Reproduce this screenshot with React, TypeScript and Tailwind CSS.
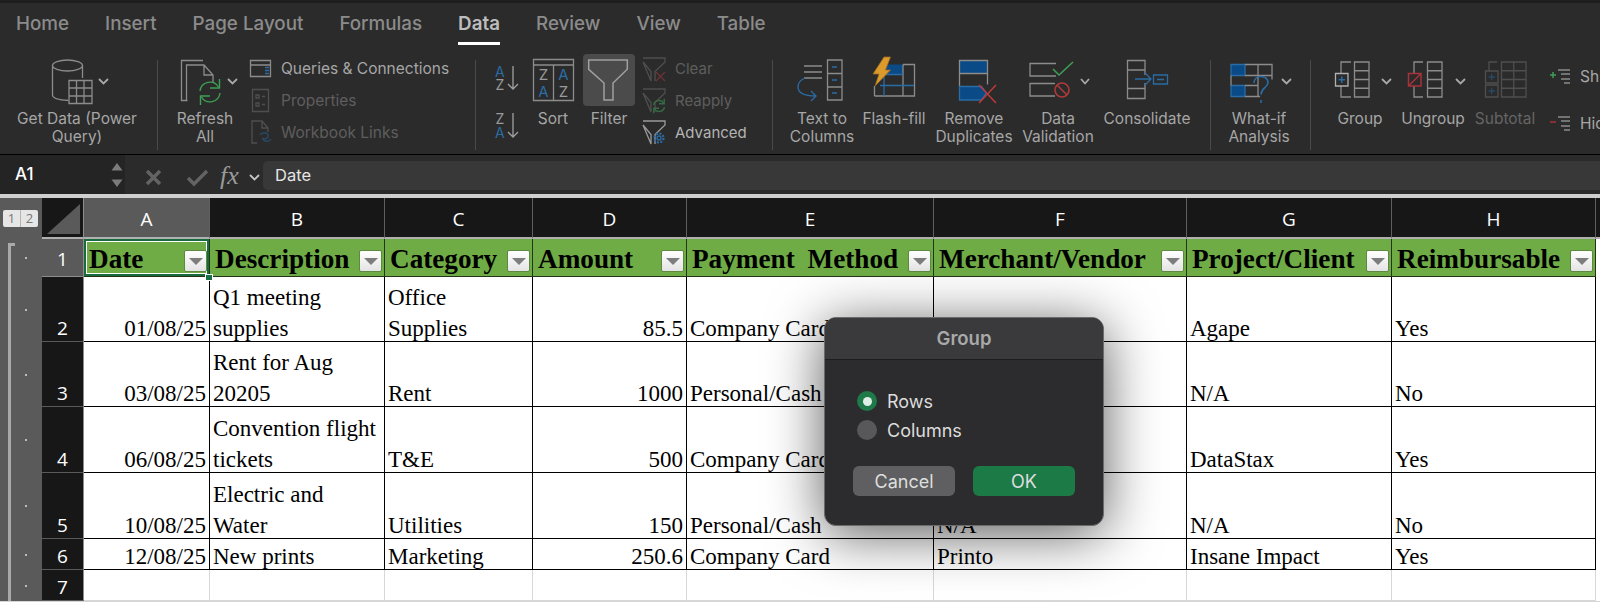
import type { ReactNode } from "react";

const GRAY = "#8c8c8c";
const DIM = "#4f4f4f";
const BLUE = "#2a6ca6";
const FILL = "#0a4a86";

// svg whose viewBox is in page coordinates, so the strokes can be read off the picture
function Ico({ x, y, w, h, children }: { x: number; y: number; w: number; h: number; children?: ReactNode }) {
  return (
    <svg className="block shrink-0" width={w} height={h} viewBox={`${x} ${y} ${w} ${h}`} fill="none" stroke={GRAY} strokeWidth={1.3}>
      {children}
    </svg>
  );
}

function Chevron({ x }: { x: number }) {
  return <path d={`M${x} 79l4.5 4.5 4.5-4.5`} stroke="#a8a8a8" strokeWidth={1.8} />;
}

function Sync({ cx, cy, r, color }: { cx: number; cy: number; r: number; color: string }) {
  const a = r * 0.35;
  return (
    <g stroke={color} strokeWidth={1.4}>
      <path d={`M${cx - r} ${cy - 1}A${r} ${r} 0 0 1 ${cx + r * 0.85} ${cy - r * 0.5}`} />
      <path d={`M${cx + r * 0.95} ${cy - r * 0.95 - a}v${r * 0.55 + a}h-${r * 0.6 + a}`} />
      <path d={`M${cx + r} ${cy + 1}A${r} ${r} 0 0 1 ${cx - r * 0.85} ${cy + r * 0.5}`} />
      <path d={`M${cx - r * 0.95} ${cy + r * 0.95 + a}v-${r * 0.55 + a}h${r * 0.6 + a}`} />
    </g>
  );
}

function Funnel({ y, color }: { y: number; color: string }) {
  return <path d={`M643 ${y}h22v4l-10 9.500v9.500M651 ${y + 23}v-9.500l-8-9.500z`} stroke={color} />;
}

function Divider() {
  return <div className="w-px h-[90px] mt-[7px] shrink-0 bg-[#4a4a4a]" />;
}

function Big({ x, w, label, dim, children }: { x: number; w: number; label: string; dim?: boolean; children?: ReactNode }) {
  return (
    <div className="flex flex-col w-min shrink-0">
      <Ico x={x} y={53} w={w} h={57}>
        {children}
      </Ico>
      <div className={`text-center text-[15.5px] leading-[18px] whitespace-pre-line ${dim ? "text-[#656565]" : "text-[#a6a6a6]"}`}>{label}</div>
    </div>
  );
}

function Small({ x, w, y, label, cls, children }: { x: number; w: number; y: number; label: string; cls: string; children?: ReactNode }) {
  return (
    <div className="flex items-center h-[32px]">
      <Ico x={x} y={y} w={w} h={32}>
        {children}
      </Ico>
      <span className={`ml-[7px] whitespace-nowrap ${cls}`}>{label}</span>
    </div>
  );
}

function Ribbon() {
  const tabs = ["Home", "Insert", "Page Layout", "Formulas", "Data", "Review", "View", "Table"];
  return (
    <div className="h-[155px] bg-[#2b2b2b] border-t-[3px] border-[#1e1e1e] border-b border-b-black overflow-hidden">
      <div className="flex gap-[36px] pl-[16px] h-[50px] pt-[9px] text-[18.8px] leading-[24px] font-medium">
        {tabs.map((t) =>
          t === "Data" ? (
            <div key={t} className="h-[33px] border-b-[3px] border-white text-[#bdbdbd] font-semibold">
              {t}
            </div>
          ) : (
            <div key={t} className="text-[#8b8b8b]">
              {t}
            </div>
          ),
        )}
      </div>

      <div className="flex pl-[12px]">
        <Big x={12} w={130} label={"Get Data (Power\nQuery)"}>
          <path d="M82.500 78V65.500c0-3-7-5.500-15-5.500s-15 2.500-15 5.500V95c0 3 7 5 16 5.500M52.500 65.500c0 3 7 5.500 15 5.500s15-2.500 15-5.500" />
          <path d="M69 80.500h23v23H69zM69 88h23M69 96h23M76.500 80.500v23M84 80.500v23" fill="#2b2b2b" />
          <Chevron x={99} />
        </Big>
        <div className="ml-[15px]">
          <Divider />
        </div>
        <div className="ml-[12px]">
          <Big x={170} w={70} label={"Refresh\nAll"}>
            <path d="M203 60.500h-21.500v40h6M186.500 100V65H204l9 10v8M204 65v10h9" />
            <Sync cx={210} cy={92} r={10} color="#3f9f55" />
            <Chevron x={228} />
          </Big>
        </div>
        <div className="ml-[8px] w-[227px] shrink-0 text-[15.5px]">
          <Small x={248} w={26} y={53} label="Queries & Connections" cls="text-[#a6a6a6]">
            <path d="M250.500 60.500h20v16h-20zM250.500 65h20" />
            <path d="M265 67.500h4M265 70.500h4M265 73.500h4" stroke={BLUE} strokeWidth={1.5} />
          </Small>
          <Small x={248} w={26} y={85} label="Properties" cls="text-[#5e5e5e]">
            <path d="M252.500 89.500h16v22h-16z" stroke={DIM} />
            <path d="M256 95h3v3h-3zM256 103h3v3h-3zM262 96.500h3M262 104.500h3" stroke={DIM} />
          </Small>
          <Small x={248} w={26} y={117} label="Workbook Links" cls="text-[#5e5e5e]">
            <path d="M257 143h-5v-22h10l6 7v4M262 121v7h6" stroke={DIM} />
            <path d="M260 135c2-3 7-3 8 0s-3 5-6 3M271 139c-2 3-7 3-8 0" stroke="#294a66" />
          </Small>
        </div>
        <Divider />
        <Ico x={476} y={53} w={50} h={90}>
          <g stroke="none" fontFamily="Inter, sans-serif" fontSize={14} fontWeight={400}>
            <text x={495} y={77} fill={BLUE}>A</text>
            <text x={495.500} y={90} fill="#9a9a9a">Z</text>
            <text x={495.500} y={124} fill="#9a9a9a">Z</text>
            <text x={495} y={138} fill={BLUE}>A</text>
          </g>
          <path d="M513 66v23m-5-5l5 5 5-5M513 113v24m-5-5l5 5 5-5" stroke="#a0a0a0" />
        </Ico>
        <Big x={526} w={54} label="Sort">
          <path d="M533.500 59.500h40v41h-40zM533.500 65h40M553.500 65v35.500" />
          <g stroke="none" fontFamily="Inter, sans-serif" fontSize={15} fontWeight={400} textAnchor="middle">
            <text x={543.500} y={80} fill="#9a9a9a">Z</text>
            <text x={543.500} y={97} fill={BLUE}>A</text>
            <text x={563.500} y={80} fill={BLUE}>A</text>
            <text x={563.500} y={97} fill="#9a9a9a">Z</text>
          </g>
        </Big>
        <Big x={580} w={58} label="Filter">
          <rect x={583} y={54} width={52} height={52} rx={4} fill="#4b4b4b" stroke="none" />
          <path d="M588.700 60h38.600v9.300L613 83v17h-9V83l-15.300-13.700z" stroke="#a0a0a0" strokeWidth={1.5} />
        </Big>
        <div className="ml-[2px] w-[132px] shrink-0 text-[15px]">
          <Small x={640} w={28} y={53} label="Clear" cls="text-[#5e5e5e]">
            <Funnel y={58} color={DIM} />
            <path d="M656 72l9 9m0-9l-9 9" stroke="#6f3232" />
          </Small>
          <Small x={640} w={28} y={85} label="Reapply" cls="text-[#5e5e5e]">
            <Funnel y={89} color={DIM} />
            <Sync cx={659} cy={106} r={5.500} color="#356b42" />
          </Small>
          <Small x={640} w={28} y={117} label="Advanced" cls="text-[#b4b4b4]">
            <Funnel y={121} color="#9a9a9a" />
            <circle cx={659} cy={138} r={2} stroke={BLUE} />
            <circle cx={659} cy={138} r={4.500} stroke={BLUE} strokeWidth={2.200} strokeDasharray="2 1.500" />
          </Small>
        </div>
        <Divider />
        <div className="ml-[12px]">
          <Big x={785} w={74} label={"Text to\nColumns"}>
            <path d="M804 66h18M804 72h18M804 78h18M827.500 60h14.500v40h-14.500zM827.500 73.500h14.500M827.500 87h14.500" />
            <path d="M832 67h5M832 80h5M832 93h5" stroke={BLUE} />
            <path d="M805 78c-5 2-7 5-7 9 0 6 7 9 18 9m-5-5l5 5-5 5" stroke={BLUE} />
          </Big>
        </div>
        <Big x={859} w={70} label="Flash-fill">
          <path d="M884 64.500h19v10h-19z" fill={FILL} stroke="none" />
          <path d="M874.500 96V86M874.500 96h40V64.500h-11.500M903 64.500v31.500" />
          <path d="M884 64.500v31.500M903 74.500H884M880 85.500h34" stroke={BLUE} />
          <path d="M884 57h6.500l-5 13h5L875 86l4-12h-6z" fill="#dd9a2c" stroke="#9c6a1e" strokeWidth={0.8} />
        </Big>
        <Big x={929} w={90} label={"Remove\nDuplicates"}>
          <path d="M959.500 60.500h28v13h-28z" fill={FILL} stroke={GRAY} />
          <path d="M987.500 73.500v11M959.500 73.500v13" />
          <path d="M959.500 86.500h22l5 6.500-5 7h-22z" fill={FILL} stroke={BLUE} />
          <path d="M979 85l17 18m0-18l-17 18" stroke="#b83a3a" strokeWidth={1.6} />
        </Big>
        <Big x={1019} w={78} label={"Data\nValidation"}>
          <path d="M1056 63.500h-26v12.500h26M1055 83.500h-25v12.500h25" />
          <path d="M1053 69l6 6 14-13" stroke="#3f9f55" strokeWidth={1.5} />
          <circle cx={1062} cy={90} r={7} stroke="#b03a3a" strokeWidth={1.6} />
          <path d="M1057 85l10 10" stroke="#b03a3a" strokeWidth={1.6} />
          <path d="M1081 79l4 4.500 4-4.500" stroke="#a8a8a8" strokeWidth={1.8} />
        </Big>
        <Big x={1097} w={100} label="Consolidate">
          <path d="M1127.500 60.500h17.500v9.500h-17.500zM1145 88.500h-17.500v10h17.500zM1127.500 70v18.500M1145 70v5M1145 83v5.500" />
          <path d="M1135 79h15m-5-6l6 6-6 6" stroke={BLUE} />
          <path d="M1153.500 75h14v9h-14zM1157 79.500h7" stroke={BLUE} />
        </Big>
        <div className="ml-[13px]">
          <Divider />
        </div>
        <div className="ml-[11px]">
          <Big x={1222} w={74} label={"What-if\nAnalysis"}>
            <path d="M1231 64.500h14v11h-14zM1231 85.500h14v11h-14z" fill={FILL} stroke={BLUE} />
            <path d="M1245 64.500h27v15M1245 75.500h27M1245 85.500h13M1245 96.500h15M1258 64.500v32M1231 75.500v10" />
            <path d="M1254 83c0-4 3-6.500 7-6.500s7 2.500 7 6c0 5-7 5.500-7 12" stroke={BLUE} strokeWidth={1.600} />
            <path d="M1261 100v3" stroke={BLUE} strokeWidth={1.600} />
            <Chevron x={1282} />
          </Big>
        </div>
        <div className="ml-[14px]">
          <Divider />
        </div>
        <div className="ml-[11px]">
          <Big x={1322} w={76} label="Group">
            <path d="M1354.500 62h14.500v35h-14.500zM1354.500 70.750h14.500M1354.500 79.500h14.500M1354.500 88.250h14.500" />
            <path d="M1351 62h-10v11M1341 86v11h10" />
            <path d="M1335.500 73.500h12.500v12.500h-12.500z" stroke="#b0b0b0" />
            <path d="M1338.500 79.800h6.500M1341.750 76.500v6.500" stroke={BLUE} strokeWidth={1.500} />
            <Chevron x={1382} />
          </Big>
        </div>
        <Big x={1398} w={70} label="Ungroup">
          <path d="M1427.500 62h14.500v35h-14.500zM1427.500 70.750h14.500M1427.500 79.500h14.500M1427.500 88.250h14.500" />
          <path d="M1423 62h-9v11M1414 86v11h9" />
          <path d="M1408.500 73.500h12.500v12.500h-12.500zM1408.500 86l12.500-12.500" stroke="#a8323a" strokeWidth={1.500} />
          <Chevron x={1456} />
        </Big>
        <Big x={1468} w={74} label="Subtotal" dim>
          <path d="M1501.500 62h24.500v35h-24.500zM1501.500 70.750h24.500M1501.500 79.500h24.500M1501.500 88.250h24.500M1513.750 62v35" stroke={DIM} />
          <path d="M1497 62h-8v9M1485.500 71h12.500v12h-12.500zM1485.500 85h12.500v12h-12.500z" stroke={DIM} />
          <path d="M1488.500 77h6.500M1491.750 73.800v6.500M1488.500 91h6.500M1491.750 87.800v6.500" stroke="#2a4a68" strokeWidth={1.300} />
        </Big>
        <div className="ml-[6px] shrink-0">
          <div className="flex items-center h-[47px]">
            <Ico x={1548} y={53} w={26} h={47}>
              <path d="M1550 75h6M1553 72v6" stroke="#3f9f55" strokeWidth={1.500} />
              <path d="M1558 70h12M1561 74h9M1561 79h9M1564 83h6" />
            </Ico>
            <span className="ml-[6px] text-[15.5px] text-[#a6a6a6] w-[20px] overflow-hidden">Sh</span>
          </div>
          <div className="flex items-center h-[47px]">
            <Ico x={1548} y={100} w={26} h={47}>
              <path d="M1550 122h6" stroke="#a8323a" strokeWidth={1.500} />
              <path d="M1558 117h12M1561 121h9M1561 126h9M1564 130h6" />
            </Ico>
            <span className="ml-[6px] text-[15.5px] text-[#a6a6a6] w-[20px] overflow-hidden whitespace-nowrap">Hid</span>
          </div>
        </div>
      </div>
    </div>
  );
}

function FormulaBar() {
  return (
    <div className="h-[43px] flex bg-[#2b2b2b] border-b-[4px] border-[#cfcfcf]">
      <div className="w-[125px] h-full flex items-center justify-between pl-[15px] bg-[#242424]">
        <span className="text-[17px] font-medium text-white">A1</span>
        <svg width={16} height={28} viewBox="0 0 16 28" fill="#7b7b7b">
          <path d="M8 2l5.500 7.500h-11zM8 26l-5.500-7.500h11z" />
        </svg>
      </div>
      <svg width={138} height={39} viewBox="125 155 138 39" fill="none" className="shrink-0">
        <path d="M147 171l13 13m0-13l-13 13" stroke="#636363" strokeWidth={3.500} />
        <path d="M188 178l6 6 13-13" stroke="#636363" strokeWidth={3.500} />
        <text x={220} y={184} fontFamily="'Liberation Serif', serif" fontStyle="italic" fontSize={26} fill="#9a9a9a">
          fx
        </text>
        <path d="M250 175l4.500 4.500 4.500-4.500" stroke="#c4c4c4" strokeWidth={1.800} />
      </svg>
      <div className="flex-1 mt-[6px] h-[29px] pl-[12px] rounded-tl-[5px] rounded-bl-[5px] bg-[#383838] text-[16.500px] leading-[29px] text-[#e6e6e6]">Date</div>
    </div>
  );
}

const HEAD = ["Date", "Description", "Category", "Amount", "Payment Method", "Merchant/Vendor", "Project/Client", "Reimbursable"];
const COLS = ["A", "B", "C", "D", "E", "F", "G", "H"];
const ROWS = [
  ["01/08/25", "Q1 meeting\nsupplies", "Office\nSupplies", "85.5", "Company Card", "", "Agape", "Yes"],
  ["03/08/25", "Rent for Aug\n20205", "Rent", "1000", "Personal/Cash", "", "N/A", "No"],
  ["06/08/25", "Convention flight\ntickets", "T&E", "500", "Company Card", "", "DataStax", "Yes"],
  ["10/08/25", "Electric and\nWater", "Utilities", "150", "Personal/Cash", "N/A", "N/A", "No"],
  ["12/08/25", "New prints", "Marketing", "250.6", "Company Card", "Printo", "Insane Impact", "Yes"],
];

function FilterButton() {
  return (
    <div className="absolute right-[2px] top-[11px] w-[23px] h-[22px] flex items-center justify-center rounded-[2px] bg-gradient-to-b from-white to-[#e4e4e4] border border-[#5d8a40]">
      <div className="w-0 h-0 border-x-[7px] border-x-transparent border-t-[7px] border-t-[#7d7d7d]" />
    </div>
  );
}

function Sheet() {
  const gutter = "bg-[#5a5a5a] flex items-center";
  const num = "flex items-end justify-center bg-[#171717] border-b border-[#5a5a5a] border-r border-r-[#8d8d8d] text-[19px] leading-[26px] font-medium text-white font-['Open_Sans',sans-serif]";
  const dot = <div className="ml-[25px] w-[2px] h-[2px] bg-[#bdbdbd]" />;
  return (
    <div className="relative grid grid-cols-[42px_42px_126px_175px_148px_154px_247px_253px_205px_204px_4px] grid-rows-[41px_38px_65px_65px_66px_66px_31px_31px] font-['Liberation_Serif',serif] text-[23px] leading-[31px] text-black">
      {/* column headers */}
      <div className={`${gutter} pl-[3px]`}>
        <div className="flex w-[35px] h-[17px] rounded-[2px] bg-[#e6e6e6] font-['Open_Sans',sans-serif] text-[13px] leading-[17px] text-[#777777]">
          <span className="flex-1 text-center border-r border-[#b5b5b5]">1</span>
          <span className="flex-1 text-center">2</span>
        </div>
      </div>
      <div className="bg-[#171717] border-b-2 border-[#b0b0b0] border-r border-r-[#8d8d8d]">
        <svg width={41} height={39} viewBox="0 0 41 39">
          <path d="M38 6v30H5z" fill="#5a5a5a" />
        </svg>
      </div>
      {COLS.map((c, i) => (
        <div
          key={c}
          className={`flex items-center justify-center pt-[3px] border-b-2 border-[#b0b0b0] border-r border-r-[#5f5f5f] font-['Open_Sans',sans-serif] text-[19px] font-medium text-white ${i === 0 ? "bg-[#5a5a5a]" : "bg-[#171717]"}`}
        >
          {c}
        </div>
      ))}
      <div className="bg-[#171717] border-b-2 border-[#b0b0b0]" />

      {/* header row */}
      <div className={gutter}>{dot}</div>
      <div className="flex items-center justify-center pt-[4px] bg-[#5a5a5a] border-r border-[#8d8d8d] border-b border-b-[#8d8d8d] font-['Open_Sans',sans-serif] text-[19px] font-medium text-white">1</div>
      {HEAD.map((h, i) => (
        <div key={h} className="relative bg-[#6fac46] border-r border-b border-[#24361a] pl-[5px] pt-[3px] font-bold text-[27.200px] leading-[34px] [word-spacing:6px] whitespace-nowrap overflow-hidden">
          {i === 0 ? <div className="absolute inset-0 border-2 border-[#176b3f] outline outline-1 -outline-offset-3 outline-white" /> : null}
          <span className="relative">{h}</span>
          <FilterButton />
        </div>
      ))}
      <div className="bg-white" />

      {/* data rows */}
      {ROWS.map((r, ri) => (
        <div key={ri} className="contents">
          <div className={gutter}>{dot}</div>
          <div className={num}>{ri + 2}</div>
          {r.map((v, ci) => (
            <div
              key={ci}
              className={`flex items-end bg-white border-r border-b border-black px-[3px] whitespace-pre-line overflow-visible ${ci === 0 || ci === 3 ? "justify-end" : ""}`}
            >
              <span className={`-mb-[2.5px] ${ci === 4 || ci === 1 ? "whitespace-pre" : ""}`}>{v}</span>
            </div>
          ))}
          <div className="bg-white" />
        </div>
      ))}

      {/* empty row */}
      <div className={gutter}>{dot}</div>
      <div className={num}>7</div>
      {COLS.map((c) => (
        <div key={c} className="bg-white border-r border-b border-[#d8d8d8]" />
      ))}
      <div className="bg-white" />

      {/* fill handle and outline bracket */}
      <div className="absolute left-[205px] top-[76px] w-[8px] h-[7px] bg-[#1a7045] border border-white" />
      <div className="absolute left-[8px] top-[45px] bottom-0 w-[7px] border-l-[3px] border-t-[3px] border-[#a9a9a9]" />
    </div>
  );
}

function Dialog() {
  return (
    <div className="absolute left-[824px] top-[317px] w-[280px] h-[209px] rounded-[12px] border border-[#6b6b6b] bg-[#2c2c2e] shadow-[0_8px_55px_rgba(0,0,0,0.65)] overflow-hidden font-['Inter',sans-serif]">
      <div className="h-[42px] flex items-center justify-center bg-[#3a3a3c] border-b border-[#1d1d1d] text-[18.500px] font-semibold text-[#a9a9a9]">Group</div>
      <div className="pt-[31px] pl-[32px] flex flex-col gap-[9px]">
        <div className="flex items-center gap-[10px] h-[20px]">
          <div className="w-[20px] h-[20px] rounded-full bg-[#1f7a4a] flex items-center justify-center">
            <div className="w-[9px] h-[9px] rounded-full bg-[#dfeee6]" />
          </div>
          <span className="text-[18px] text-[#dcdcdc]">Rows</span>
        </div>
        <div className="flex items-center gap-[10px] h-[20px]">
          <div className="w-[20px] h-[20px] rounded-full bg-[#58585a]" />
          <span className="text-[18px] text-[#dcdcdc]">Columns</span>
        </div>
      </div>
      <div className="mt-[26px] pl-[28px] flex gap-[18px] text-[18px] text-[#dedede]">
        <div className="w-[102px] h-[30px] rounded-[6px] bg-[#5f5f61] flex items-center justify-center">Cancel</div>
        <div className="w-[102px] h-[30px] rounded-[6px] bg-[#1c7a47] flex items-center justify-center">OK</div>
      </div>
    </div>
  );
}

export default function App() {
  return (
    <div className="relative w-[1600px] h-[602px] overflow-hidden bg-[#d6d6d6] font-['Inter',sans-serif]">
      <Ribbon />
      <FormulaBar />
      <Sheet />
      <Dialog />
    </div>
  );
}
